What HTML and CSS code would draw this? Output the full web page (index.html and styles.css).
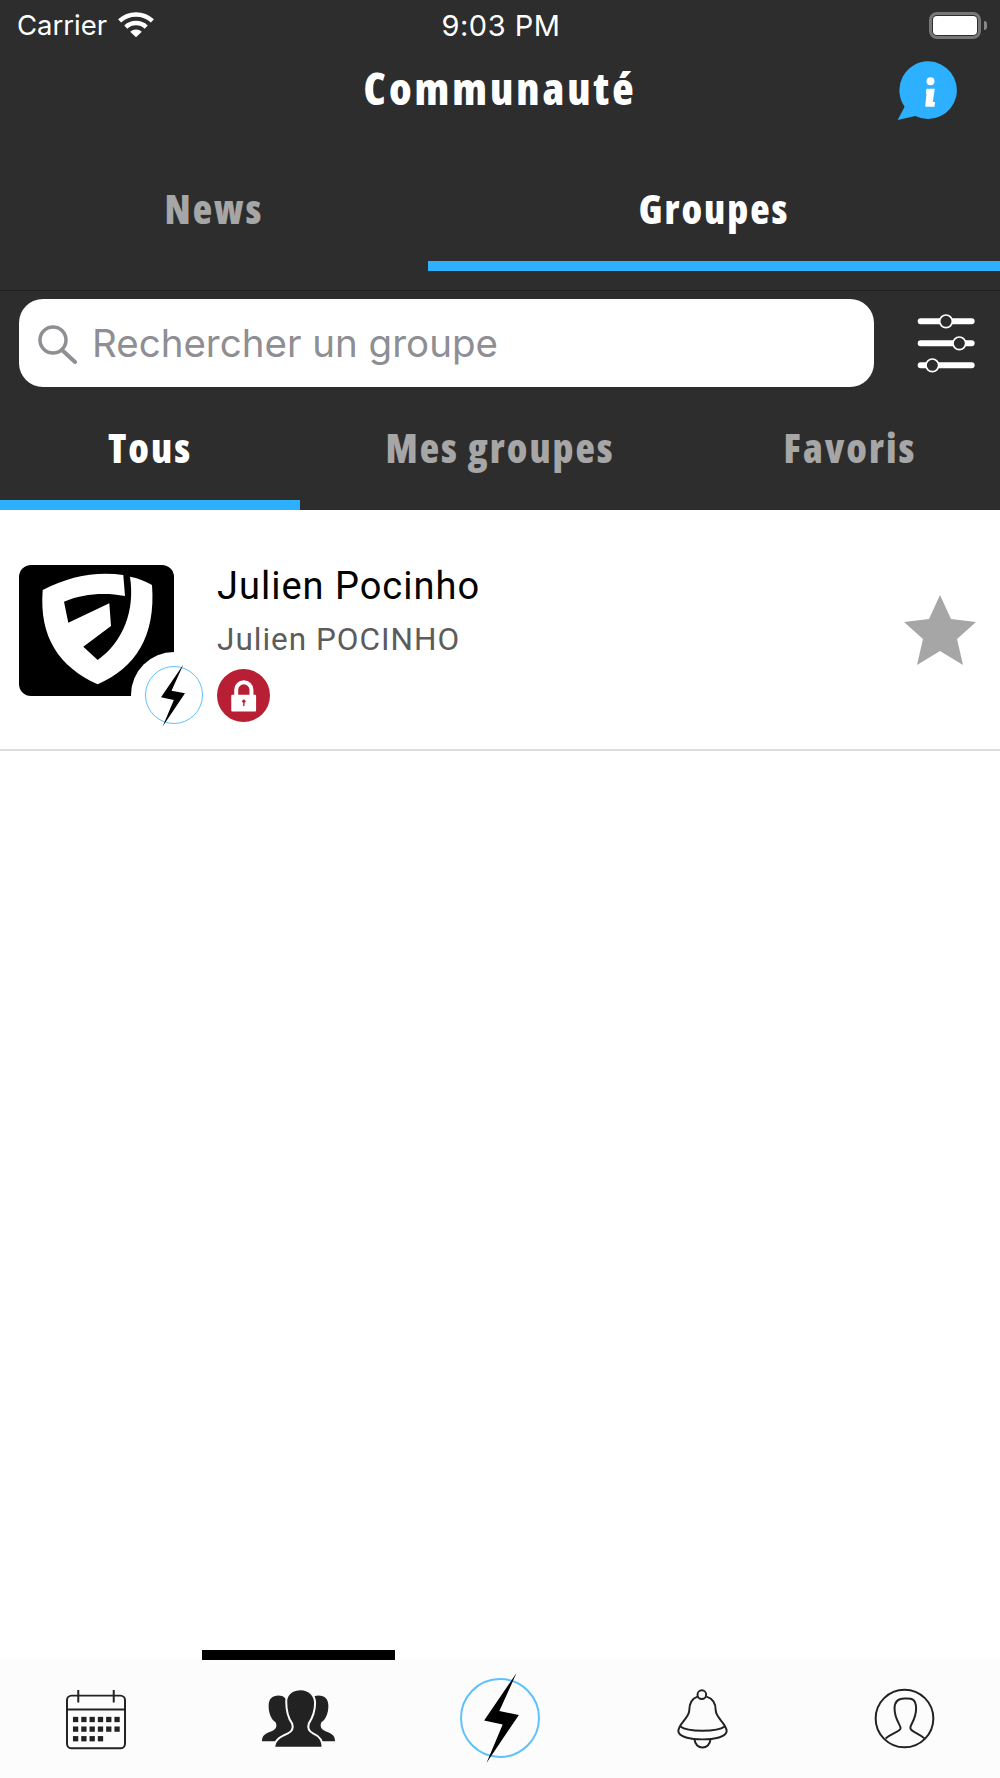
FILE: index.html
```html
<!DOCTYPE html>
<html lang="fr">
<head>
    <meta charset="UTF-8">
    <meta name="viewport" content="width=device-width, initial-scale=1.0">
    <title>Communauté</title>
    <link rel="stylesheet" href="styles.css">
</head>
<body>
    <svg class="defs" width="0" height="0">
        <symbol id="bolt" viewBox="488 372 73 189">
            <polygon points="556,372 520,452 561,460 493,561 527,480 488,472" fill="#000"/>
        </symbol>
    </svg>

    <div class="page">
        <!-- En-tete sombre -->
        <header class="header">
            <div class="status-bar">
                <div class="status-left">
                    <span>Carrier</span>
                    <svg class="wifi" viewBox="360 30 110 82">
                        <path d="M367 62 A70 70 0 0 1 463 62" fill="none" stroke="#fff" stroke-width="13"/>
                        <path d="M385 80 A44 44 0 0 1 445 80" fill="none" stroke="#fff" stroke-width="13"/>
                        <path d="M398 94 A24 24 0 0 1 432 94 L415 110 Z" fill="#fff"/>
                    </svg>
                </div>
                <span class="status-time">9:03 PM</span>
                <div class="status-right">
                    <span class="battery"><span class="battery-level"></span></span>
                    <span class="battery-tip"></span>
                </div>
            </div>

            <div class="nav">
                <h1 class="nav-title">Communauté</h1>
                <svg class="info-icon" viewBox="110 180 190 185">
                    <path d="M205 183 A87 87 0 1 1 165 348 L112 360 L133 320 A87 87 0 0 1 205 183 Z" fill="#2db0ff"/>
                    <circle cx="211" cy="243" r="12" fill="#fff"/>
                    <path d="M199 266 H224 L218 306 H225 L223 320 H195 L199 280 H197 Z" fill="#fff"/>
                </svg>
            </div>

            <div class="main-tabs">
                <div class="main-tab main-tab-news">News</div>
                <div class="main-tab main-tab-groups active">Groupes</div>
            </div>

            <div class="search-row">
                <div class="search-box">
                    <svg class="search-icon" viewBox="0 0 40 41">
                        <circle cx="15" cy="17" r="13" fill="none" stroke="#8e8e93" stroke-width="3.5"/>
                        <path d="M24 27 L37 39" fill="none" stroke="#8e8e93" stroke-width="4" stroke-linecap="round"/>
                    </svg>
                    <span class="search-placeholder">Rechercher un groupe</span>
                </div>
                <svg class="filter-icon" viewBox="170 95 180 180">
                    <g stroke="#fff" fill="none" stroke-linecap="round">
                        <path d="M184 120 H337 M184 186 H337 M184 252 H337" stroke-width="18"/>
                        <g fill="#2d2d2d" stroke-width="5">
                            <circle cx="260" cy="120" r="19"/>
                            <circle cx="300" cy="186" r="19"/>
                            <circle cx="219" cy="252" r="19"/>
                        </g>
                    </g>
                </svg>
            </div>

            <div class="sub-tabs">
                <div class="sub-tab active">Tous</div>
                <div class="sub-tab">Mes groupes</div>
                <div class="sub-tab">Favoris</div>
            </div>
        </header>

        <!-- Liste des groupes -->
        <main class="group-list">
            <div class="group-row">
                <div class="group-logo">
                    <svg class="logo-mark" viewBox="0 0 155 131">
                        <path d="M23.7 25 C50 11 78 6 104.3 10 L106 31 C85 27 63 29 45 36.7 L49.3 57.7 L90.3 38.3 L92 61 L64.3 81.7 L78.7 95 C105 76 116 45 111 11.7 C119 13 126 16 133 20 C137 72 116 103 78.7 119.3 C40 102 20 72 23.7 25 Z" fill="#fff"/>
                    </svg>
                    <span class="logo-notch"></span>
                    <span class="logo-badge">
                        <svg class="logo-bolt"><use href="#bolt"/></svg>
                    </span>
                </div>
                <div class="group-info">
                    <div class="group-name">Julien Pocinho</div>
                    <div class="group-owner">Julien POCINHO</div>
                    <svg class="lock-icon" viewBox="652 387 160 160">
                        <circle cx="732" cy="467" r="80" fill="#b81f35"/>
                        <path d="M710 480 V450 A23 23 0 0 1 756 450 V480" fill="none" stroke="#fff" stroke-width="12"/>
                        <rect x="695" y="465" width="75" height="50" rx="3" fill="#fff"/>
                        <circle cx="733" cy="484" r="5" fill="#b81f35"/>
                        <rect x="731" y="485" width="4" height="14" fill="#b81f35"/>
                    </svg>
                </div>
                <svg class="star-icon" viewBox="0 0 72 70">
                    <polygon points="36,0 47,24 72,27 53,44 59,70 36,56 13,70 19,44 0,27 25,24" fill="#a6a6a6"/>
                </svg>
            </div>
        </main>

        <!-- Barre du bas -->
        <nav class="tab-bar">
            <div class="tab-item">
                <svg class="tab-icon calendar-icon" viewBox="195 172 190 188">
                    <g fill="none" stroke="#222" stroke-width="6">
                        <rect x="201" y="194" width="175" height="159" rx="14"/>
                        <path d="M201 236 H376 M235 177 V215 M342 177 V215"/>
                    </g>
                    <g fill="#222">
                        <rect x="219" y="258" width="16" height="16"/><rect x="244" y="258" width="16" height="16"/><rect x="269" y="258" width="16" height="16"/><rect x="294" y="258" width="16" height="16"/><rect x="319" y="258" width="16" height="16"/><rect x="344" y="258" width="16" height="16"/>
                        <rect x="219" y="287" width="16" height="16"/><rect x="244" y="287" width="16" height="16"/><rect x="269" y="287" width="16" height="16"/><rect x="294" y="287" width="16" height="16"/><rect x="319" y="287" width="16" height="16"/><rect x="344" y="287" width="16" height="16"/>
                        <rect x="219" y="316" width="16" height="16"/><rect x="244" y="316" width="16" height="16"/><rect x="269" y="316" width="16" height="16"/><rect x="294" y="316" width="16" height="16"/>
                    </g>
                </svg>
            </div>
            <div class="tab-item active">
                <svg class="tab-icon group-icon" viewBox="785 175 220 183">
                    <g fill="#222">
                        <path d="M785 335 C785 318 795 312 812 306 C826 300 832 292 826 278 C812 268 805 250 805 228 C805 208 815 197 835 197 C850 197 860 205 862 225 L885 320 L830 335 Z"/>
                        <path d="M1005 335 C1005 318 995 312 978 306 C964 300 958 292 964 278 C978 268 985 250 985 228 C985 208 975 197 955 197 C940 197 930 205 928 225 L905 320 L960 335 Z"/>
                        <path d="M822 355 C822 330 840 322 862 312 C878 305 880 295 876 282 C866 268 858 245 858 215 C858 190 880 178 902 178 C925 178 945 195 945 220 C945 245 935 268 926 282 C922 295 925 305 940 312 C960 320 968 335 968 355 Z" stroke="#fcfcfc" stroke-width="6"/>
                    </g>
                </svg>
            </div>
            <div class="tab-item">
                <span class="tab-circle">
                    <svg class="tab-bolt"><use href="#bolt"/></svg>
                </span>
            </div>
            <div class="tab-item">
                <svg class="tab-icon bell-icon" viewBox="525 172 160 190">
                    <g fill="none" stroke="#222" stroke-width="6">
                        <circle cx="603" cy="192" r="13"/>
                        <path d="M590 198 C570 205 565 225 565 240 C565 262 532 280 532 302 C532 320 570 327 605 327 C640 327 678 320 678 302 C678 280 645 262 645 240 C645 225 640 205 617 198"/>
                        <path d="M538 288 C560 305 650 305 672 288"/>
                        <path d="M581 327 C583 360 627 360 629 327"/>
                    </g>
                </svg>
            </div>
            <div class="tab-item">
                <svg class="tab-icon profile-icon" viewBox="1118 173 184 184">
                    <g fill="none" stroke="#222" stroke-width="6">
                        <circle cx="1210" cy="265" r="87"/>
                        <path d="M1153 325 C1170 310 1195 305 1198 295 C1200 285 1180 270 1180 235 C1180 210 1195 205 1210 205 C1225 205 1245 200 1245 235 C1245 270 1225 285 1228 295 C1230 305 1255 310 1270 325"/>
                    </g>
                </svg>
            </div>
        </nav>
    </div>
</body>
</html>
```

FILE: styles.css
```css
* {
    box-sizing: border-box;
}

body {
    margin: 0;
    background-color: #fff;
    overflow: hidden;
}

.defs {
    display: block;
    height: 0;
}

.page {
    height: 1778px;
    display: flex;
    flex-direction: column;
}

/* Header */
.header {
    background-color: #2d2d2d;
    color: #fff;
    height: 510px;
    flex: none;
}

.status-bar {
    height: 50px;
    padding: 0 13px 0 17px;
    display: grid;
    grid-template-columns: 1fr auto 1fr;
    align-items: center;
    font-family: "Inter", "Liberation Sans", sans-serif;
    font-size: 27.5px;
}

.status-left {
    display: flex;
    align-items: center;
    gap: 10px;
}

.status-time {
    font-size: 29px;
    letter-spacing: 0.5px;
    margin-left: -2px;
}

.wifi {
    width: 38px;
    height: 28px;
    margin-top: -3px;
}

.status-right {
    display: flex;
    justify-content: flex-end;
    align-items: center;
    gap: 3px;
}

.battery {
    width: 52px;
    height: 27px;
    border: 3px solid #777;
    border-radius: 8px;
    padding: 1px;
    display: block;
}

.battery-level {
    display: block;
    height: 100%;
    background-color: #fff;
    border-radius: 4px;
}

.battery-tip {
    width: 3px;
    height: 9px;
    background-color: #888;
    border-radius: 0 3px 3px 0;
}

.nav {
    height: 76px;
    margin-bottom: 44px;
    position: relative;
    display: flex;
    justify-content: center;
    align-items: center;
}

.nav-title {
    margin: 0;
    font-family: "Open Sans", "Liberation Sans", sans-serif;
    font-stretch: 75%;
    font-size: 44px;
    font-weight: 800;
    letter-spacing: 3px;
}

.info-icon {
    position: absolute;
    left: 897px;
    top: 10px;
    width: 63px;
    height: 62px;
}

.main-tabs {
    display: grid;
    grid-template-columns: 428px 572px;
    font-family: "Open Sans", "Liberation Sans", sans-serif;
    font-stretch: 75%;
    font-size: 40px;
    font-weight: 800;
    letter-spacing: 2px;
    color: #a6a6a6;
    text-align: center;
}

.main-tab {
    height: 101px;
    line-height: 78px;
    border-bottom: 10px solid transparent;
}

.main-tab.active {
    color: #fff;
    border-bottom-color: #2db0ff;
}

.search-row {
    margin-top: 19px;
    height: 97px;
    padding: 8px 24px 0 19px;
    border-top: 1px solid #1f1f1f;
    display: flex;
    justify-content: space-between;
}

.search-box {
    width: 855px;
    height: 88px;
    background-color: #fff;
    border-radius: 24px;
    display: flex;
    align-items: center;
    gap: 14px;
    padding-left: 19px;
}

.search-icon {
    width: 40px;
    height: 41px;
}

.search-placeholder {
    font-family: "Inter", "Liberation Sans", sans-serif;
    font-size: 38.5px;
    color: #8e8e93;
}

.filter-icon {
    width: 60px;
    height: 60px;
    margin-top: 14px;
}

.sub-tabs {
    display: grid;
    grid-template-columns: 300px 400px 300px;
    font-family: "Open Sans", "Liberation Sans", sans-serif;
    font-stretch: 75%;
    font-size: 40px;
    font-weight: 800;
    letter-spacing: 2px;
    color: #a6a6a6;
    text-align: center;
}

.sub-tab {
    height: 123px;
    padding-top: 9px;
    line-height: 104px;
    border-bottom: 10px solid transparent;
}

.sub-tab.active {
    color: #fff;
    border-bottom-color: #2db0ff;
}

/* Group list */
.group-list {
    flex: 1;
}

.group-row {
    height: 241px;
    padding: 55px 24px 0 19px;
    border-bottom: 2px solid #ddd;
    display: flex;
    align-items: flex-start;
}

.group-logo {
    width: 155px;
    height: 131px;
    background-color: #000;
    border-radius: 12px;
    position: relative;
    flex: none;
}

.logo-mark {
    display: block;
    width: 155px;
    height: 131px;
}

.logo-notch {
    position: absolute;
    left: 112px;
    top: 87px;
    width: 86px;
    height: 86px;
    border-radius: 50%;
    background-color: #fff;
}

.logo-badge {
    position: absolute;
    left: 126px;
    top: 101px;
    width: 58px;
    height: 58px;
    border: 1.5px solid #5fc1fb;
    border-radius: 50%;
}

.logo-bolt {
    position: absolute;
    left: 15px;
    top: -3px;
    width: 24px;
    height: 63px;
}

.group-info {
    margin-left: 43px;
    flex: 1;
    font-family: "Roboto", "Liberation Sans", sans-serif;
}

.group-name {
    margin-top: 0;
    font-size: 38px;
    line-height: 42px;
    letter-spacing: 1px;
    color: #000;
}

.group-owner {
    margin-top: 15px;
    font-size: 31.5px;
    line-height: 36px;
    letter-spacing: 1px;
    color: #5c5c5c;
}

.lock-icon {
    display: block;
    margin-top: 11px;
    width: 53px;
    height: 53px;
}

.star-icon {
    margin-top: 30px;
    width: 72px;
    height: 70px;
}

/* Bottom bar */
.tab-bar {
    height: 128px;
    flex: none;
    background: linear-gradient(#fff 9px, #fcfcfc 9px);
    display: grid;
    grid-template-columns: repeat(5, 202px);
    justify-content: center;
}

.tab-item {
    position: relative;
    display: flex;
    justify-content: center;
    padding-top: 38px;
}

.tab-item.active::before {
    content: "";
    position: absolute;
    top: 0;
    left: 5px;
    width: 193px;
    height: 10px;
    background-color: #000;
}

.tab-icon {
    display: block;
}

.calendar-icon {
    width: 63px;
    height: 63px;
}

.group-icon {
    width: 73px;
    height: 61px;
}

.bell-icon {
    width: 53px;
    height: 63px;
}

.profile-icon {
    width: 61px;
    height: 61px;
}

.tab-circle {
    position: relative;
    margin-top: -10px;
    width: 80px;
    height: 80px;
    border: 2px solid #5fc1fb;
    border-radius: 50%;
}

.tab-bolt {
    position: absolute;
    left: 22px;
    top: -7px;
    width: 35px;
    height: 90px;
}
```
